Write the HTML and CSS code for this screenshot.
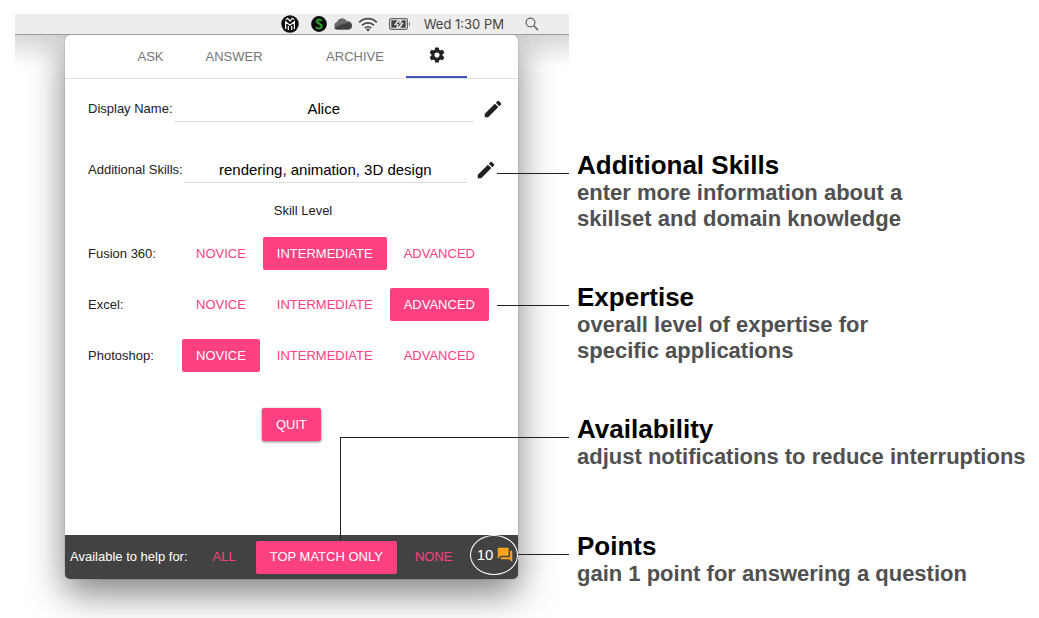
FILE: index.html
```html
<!DOCTYPE html>
<html lang="en">
<head>
<meta charset="utf-8">
<title>Settings panel</title>
<link rel="stylesheet" href="styles.css">
</head>
<body>
<div class="page">
  <main class="stage">
    <header class="menubar">
      <div class="logos">
        <svg width="18" height="18" viewBox="0 0 18 18" aria-hidden="true"><circle cx="9" cy="9" r="8.700" fill="#0b0b0b"/><path d="M4.600 14V6.800L9 10.200l4.400-3.400V14M7.300 15v-4M10.700 15v-4M4.800 4.600 6.600 3.200 9 6l2.400-2.800 1.800 1.400" fill="none" stroke="#fff" stroke-width="1.200"/></svg>
        <svg width="16" height="16" viewBox="0 0 16 16" aria-hidden="true"><circle cx="8" cy="8" r="7.900" fill="#0b0b0b"/><path d="M10.800 4.800C10 2.800 5.800 2.900 5.700 5.300c0 2.600 4.900 2.300 4.900 5.200 0 2.500-4.500 2.700-5.500.6" fill="none" stroke="#2fb52f" stroke-width="1.500"/><path d="M9.500 5.300C8.700 4.500 7 4.700 7 5.700c.3 1.500 4.500 2 4.700 4.600" fill="none" stroke="#2fb52f" stroke-width=".6"/></svg>
      </div>
      <svg width="19" height="12" viewBox="0 0 19 12" aria-hidden="true"><path d="M4.500 11.500A4 4 0 0 1 4 3.800 5.500 5.500 0 0 1 13.800 3a4.300 4.300 0 0 1 1.800 8.500z" fill="#6a6a6a"/><path d="m1.200 10 7.300-3.400 6-1.800a3.600 3.600 0 0 1 4.300 3.700c0 2-1.500 3-3.200 3H4.500c-1.500 0-2.600-.4-3.300-1.500z" fill="#3f3f3f"/></svg>
      <svg width="20" height="15" viewBox="0 0 20 15" aria-hidden="true"><g fill="none" stroke="#4b4b4b" stroke-width="1.700"><path d="M1.200 5.300a12.500 12.500 0 0 1 17.600 0"/><path d="M4 8.300a8.500 8.500 0 0 1 12 0"/><path d="M6.800 11.100a4.500 4.500 0 0 1 6.400 0"/></g><path d="m10 14.500-2-2a2.800 2.800 0 0 1 4 0z" fill="#4b4b4b"/></svg>
      <svg class="battery" width="22" height="12" viewBox="0 0 22 12" aria-hidden="true"><rect x=".6" y=".6" width="17.800" height="10.800" rx="1.800" fill="none" stroke="#666" stroke-width="1.200"/><path d="M2.300 2.300h6.200L5 7h3l-.8 2.700H2.300zM13 2.300h3.700v7.400h-5.500l3.600-5h-3z" fill="#444"/><path d="M11 2.200 7.200 6.300h2.600L8.600 9.800l3.900-4.200h-2.700z" fill="#444"/><path d="M20 4v4c1.300-.6 1.300-3.400 0-4z" fill="#555"/></svg>
      <span class="clock">Wed 1:30 PM</span>
      <svg width="14" height="14" viewBox="0 0 14 14" aria-hidden="true"><circle cx="5.500" cy="5.500" r="4.400" fill="none" stroke="#666" stroke-width="1.300"/><path d="m8.800 8.800 4.300 4.300" stroke="#666" stroke-width="1.500"/></svg>
    </header>
    <div class="desktop">
      <section class="panel">
        <nav class="tabs">
          <button class="tab tab-ask">ASK</button>
          <button class="tab tab-answer">ANSWER</button>
          <button class="tab tab-archive">ARCHIVE</button>
          <button class="tab tab-settings" aria-label="Settings" aria-current="page">
            <svg width="18" height="18" viewBox="0 0 24 24" aria-hidden="true"><path fill="#212121" d="M19.430 12.980c.04-.32.070-.64.070-.98s-.03-.66-.07-.98l2.110-1.650c.19-.15.240-.42.120-.64l-2-3.460c-.12-.22-.39-.3-.61-.22l-2.490 1c-.52-.4-1.080-.73-1.690-.98l-.38-2.650C14.460 2.180 14.250 2 14 2h-4c-.25 0-.46.180-.49.420l-.38 2.650c-.61.250-1.170.590-1.690.980l-2.490-1c-.23-.09-.49 0-.61.220l-2 3.460c-.13.220-.07.490.120.640l2.110 1.650c-.04.320-.07.650-.07.980s.03.660.070.980l-2.110 1.650c-.19.150-.24.420-.12.640l2 3.460c.12.220.390.300.610.220l2.490-1c.52.400 1.080.730 1.690.980l.38 2.650c.03.240.240.420.490.420h4c.25 0 .46-.18.490-.42l.38-2.650c.61-.25 1.170-.59 1.690-.98l2.490 1c.23.090.490 0 .61-.22l2-3.460c.12-.22.070-.49-.12-.64zM12 15.500c-1.930 0-3.500-1.570-3.500-3.500s1.570-3.500 3.500-3.500 3.500 1.570 3.500 3.500-1.570 3.500-3.500 3.500z"/></svg>
          </button>
        </nav>
        <div class="settings">
          <div class="field">
            <label for="name">Display Name:</label>
            <input id="name" type="text" value="Alice">
            <button class="edit" aria-label="Edit display name"><svg width="22" height="22" viewBox="0 0 24 24" aria-hidden="true"><path fill="#212121" d="M3 17.250V21h3.750L17.810 9.940l-3.750-3.750zM20.710 7.040a1 1 0 0 0 0-1.410l-2.340-2.340a1 1 0 0 0-1.410 0l-1.830 1.830 3.750 3.750z"/></svg></button>
          </div>
          <div class="field field-skills">
            <label for="skills">Additional Skills:</label>
            <input id="skills" type="text" value="rendering, animation, 3D design">
            <button class="edit" aria-label="Edit additional skills"><svg width="22" height="22" viewBox="0 0 24 24" aria-hidden="true"><path fill="#212121" d="M3 17.250V21h3.750L17.810 9.940l-3.750-3.750zM20.710 7.040a1 1 0 0 0 0-1.410l-2.340-2.340a1 1 0 0 0-1.410 0l-1.830 1.830 3.750 3.750z"/></svg></button>
          </div>
          <h2 class="levels-title">Skill Level</h2>
          <div class="levels">
            <div class="level"><span class="app">Fusion 360:</span><button class="btn">NOVICE</button><button class="btn on" aria-pressed="true">INTERMEDIATE</button><button class="btn">ADVANCED</button></div>
            <div class="level"><span class="app">Excel:</span><button class="btn">NOVICE</button><button class="btn">INTERMEDIATE</button><button class="btn on" aria-pressed="true">ADVANCED</button></div>
            <div class="level"><span class="app">Photoshop:</span><button class="btn on" aria-pressed="true">NOVICE</button><button class="btn">INTERMEDIATE</button><button class="btn">ADVANCED</button></div>
          </div>
          <button class="btn on quit">QUIT</button>
        </div>
        <footer class="footer">
          <span class="help">Available to help for:</span>
          <button class="btn">ALL</button>
          <button class="btn on" aria-pressed="true">TOP MATCH ONLY</button>
          <button class="btn">NONE</button>
          <span class="points">10
            <svg width="16" height="16" viewBox="1 1 22 22" aria-hidden="true"><path fill="#ffa41a" d="M21 6h-2v9H6v2c0 .55.450 1 1 1h11l4 4V7c0-.55-.45-1-1-1zm-4 6V3c0-.55-.45-1-1-1H3c-.55 0-1 .45-1 1v14l4-4h10c.55 0 1-.45 1-1z"/></svg>
          </span>
        </footer>
      </section>
    </div>
  </main>
  <aside class="notes">
    <section class="note"><h3>Additional Skills</h3><p>enter more information about a<br>skillset and domain knowledge</p></section>
    <section class="note"><h3>Expertise</h3><p>overall level of expertise for<br>specific applications</p></section>
    <section class="note note-availability"><h3>Availability</h3><p>adjust notifications to reduce interruptions</p></section>
    <section class="note note-points"><h3>Points</h3><p>gain 1 point for answering a question</p></section>
  </aside>
</div>
</body>
</html>
```

FILE: styles.css
```css
* { box-sizing: border-box; }

body {
  margin: 0;
  background: #fff;
  color: #212121;
  font: 13px/16px "Liberation Sans", Arial, sans-serif;
}

button {
  border: 0;
  padding: 0;
  background: none;
  color: inherit;
  font: inherit;
}

svg { display: block; flex: none; }

.page {
  display: grid;
  grid-template-columns: 554fr 462fr;
  column-gap: 8px;
  min-height: 100vh;
  padding: 14px 0 0 15px;
}

.stage {
  display: flex;
  flex-direction: column;
  min-width: 0;
}

.menubar {
  display: flex;
  align-items: center;
  justify-content: flex-end;
  gap: 6px;
  height: 21px;
  padding-right: 30px;
  background: #ededed;
  border-bottom: 1px solid #9c9c9c;
}

.logos {
  display: flex;
  align-items: center;
  gap: 12px;
}

.battery { margin-left: 5px; }

.clock {
  margin: 0 15px 0 7px;
  color: #444;
  font: 13px/20px Inter, sans-serif;
}

.desktop {
  flex: 1;
  padding: 0 51px 39px 50px;
  overflow: hidden;
  background: linear-gradient(rgba(0, 0, 0, 0.15), transparent 32px);
}

.panel {
  display: flex;
  flex-direction: column;
  height: 100%;
  border-radius: 5px;
  background: #fff;
  box-shadow: 0 0 1px rgba(0, 0, 0, 0.6), 0 14px 36px rgba(0, 0, 0, 0.5);
}

.tabs {
  display: grid;
  grid-template-columns: 55fr 61fr 106fr 17fr 102fr 61fr 51fr;
  height: 44px;
  border-bottom: 1px solid #e0e0e0;
  color: #757575;
}

.tab {
  display: flex;
  align-items: center;
  justify-content: center;
}

.tab-ask { grid-column: 2; }
.tab-answer { grid-column: 3; }
.tab-archive { grid-column: 5; }

.tab-settings {
  grid-column: 6;
  padding-top: 2px;
  padding-bottom: 4px;
  border-bottom: 2px solid #3f51b5;
}

.settings {
  flex: 1;
  display: flex;
  flex-direction: column;
  padding: 17px 14px 0 23px;
}

.field {
  display: flex;
  align-items: center;
  height: 26px;
}

.field input {
  flex: 1;
  min-width: 0;
  height: 26px;
  margin: 0 8px 0 1px;
  padding: 0;
  border: 0;
  border-bottom: 1px solid #dcdcdc;
  background: none;
  color: #000;
  font: 15px/24px "Liberation Sans", Arial, sans-serif;
  text-align: center;
}

.field-skills {
  margin-top: 35px;
  padding-right: 7px;
}

.levels-title {
  margin: 20px 0 0;
  padding-left: 14px;
  font: inherit;
  text-align: center;
}

.levels {
  display: grid;
  row-gap: 18px;
  margin-top: 18px;
}

.level {
  display: flex;
  align-items: center;
  gap: 3px;
}

.app { flex: 0 0 91px; }

.btn {
  height: 33px;
  padding: 0 14px;
  border-radius: 2px;
  color: #ff4081;
  white-space: nowrap;
}

.btn.on {
  background: #ff4081;
  color: #fff;
}

.btn.quit {
  align-self: center;
  margin: 36px 9px 0 0;
  box-shadow: 0 1px 3px rgba(0, 0, 0, 0.5);
}

.footer {
  display: flex;
  align-items: center;
  height: 44px;
  padding-left: 5px;
  border-radius: 0 0 5px 5px;
  background: #424242;
  color: #fff;
}

.help {
  margin-right: 11px;
  white-space: nowrap;
}

.footer .btn.on { margin: 0 4px 0 6px; }

.points {
  display: flex;
  flex: none;
  align-items: center;
  justify-content: center;
  gap: 4px;
  width: 48px;
  height: 40px;
  margin-left: auto;
  margin-bottom: 4px;
  padding-left: 2px;
  border: 1px solid #fff;
  border-radius: 50%;
  font-size: 15px;
}

.notes { padding-top: 136px; }

.note {
  position: relative;
  margin-bottom: 50px;
}

/* Leader line from each note back to the control it explains */
.note::before {
  content: "";
  position: absolute;
  top: 23px;
  right: 100%;
  width: 72px;
  margin-right: 8px;
  border-top: 1px solid #222;
}

.note-availability { margin-bottom: 61px; }

.note-availability::before {
  width: 228px;
  height: 103px;
  border-left: 1px solid #222;
}

.note-points { margin-bottom: 0; }
.note-points::before { width: 51px; }

.note h3 {
  margin: 0;
  color: #000;
  font-size: 26px;
  line-height: 30px;
}

.note p {
  margin: 0;
  color: #505050;
  font-size: 22px;
  font-weight: bold;
  line-height: 26px;
  white-space: nowrap;
}
```
